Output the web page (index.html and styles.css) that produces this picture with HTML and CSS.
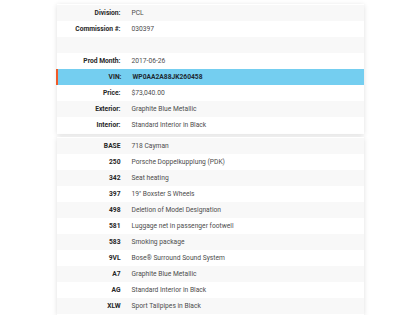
FILE: index.html
```html
<!DOCTYPE html>
<html>
<head>
<meta charset="utf-8">
<link rel="stylesheet" href="styles.css">
</head>
<body>
<div class="page">
  <div class="card">
    <div class="row"><div class="label">Division:</div><div class="value">PCL</div></div>
    <div class="row"><div class="label">Commission #:</div><div class="value">030397</div></div>
    <div class="row"><div class="label"></div><div class="value"></div></div>
    <div class="row"><div class="label">Prod Month:</div><div class="value">2017-06-26</div></div>
    <div class="row vin"><div class="label">VIN:</div><div class="value">WP0AA2A88JK260458</div></div>
    <div class="row"><div class="label">Price:</div><div class="value">$73,040.00</div></div>
    <div class="row"><div class="label">Exterior:</div><div class="value">Graphite Blue Metallic</div></div>
    <div class="row"><div class="label">Interior:</div><div class="value">Standard Interior in Black</div></div>
  </div>
  <div class="card">
    <div class="row"><div class="label">BASE</div><div class="value">718 Cayman</div></div>
    <div class="row"><div class="label">250</div><div class="value">Porsche Doppelkupplung (PDK)</div></div>
    <div class="row"><div class="label">342</div><div class="value">Seat heating</div></div>
    <div class="row"><div class="label">397</div><div class="value">19" Boxster S Wheels</div></div>
    <div class="row"><div class="label">498</div><div class="value">Deletion of Model Designation</div></div>
    <div class="row"><div class="label">581</div><div class="value">Luggage net in passenger footwell</div></div>
    <div class="row"><div class="label">583</div><div class="value">Smoking package</div></div>
    <div class="row"><div class="label">9VL</div><div class="value">Bose® Surround Sound System</div></div>
    <div class="row"><div class="label">A7</div><div class="value">Graphite Blue Metallic</div></div>
    <div class="row"><div class="label">AG</div><div class="value">Standard Interior in Black</div></div>
    <div class="row"><div class="label">XLW</div><div class="value">Sport Tailpipes in Black</div></div>
  </div>
</div>
</body>
</html>
```

FILE: styles.css
```css
html, body {
  margin: 0;
  padding: 0;
  background: #ffffff;
}
body {
  font-family: Roboto, "Liberation Sans", sans-serif;
  font-size: 6.7px;
  color: #555;
}
.page {
  display: flex;
  flex-direction: column;
  align-items: center;
  gap: 3px;
  padding-top: 4px;
}
.card {
  width: 307px;
  background: #fff;
  padding: 1px 0;
  box-shadow: 0 1px 5px rgba(0, 0, 0, 0.13);
}
.row {
  display: flex;
  height: 16px;
  align-items: center;
}
.row:nth-child(odd) {
  background: #f8f8f8;
}
.label {
  flex: none;
  width: 70px;
  text-align: right;
  font-weight: 700;
  color: #262626;
  padding-right: 6px;
  box-sizing: border-box;
}
.value {
  padding-left: 5px;
  color: #4d4d4d;
}
.row.vin {
  background: #74cef0;
  margin-left: -1px;
  border-left: 2px solid #f05a28;
}
.row.vin .value {
  font-weight: 700;
  color: #1e2a33;
}
```
